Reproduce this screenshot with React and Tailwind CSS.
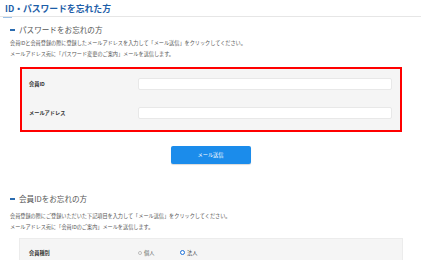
export default function App() {
  const font = { fontFamily: '"Noto Sans CJK JP", "Noto Sans", sans-serif' };
  return (
    <div style={font} className="w-[421px] h-[260px] overflow-hidden bg-white text-[#333]">
      {/* Page title */}
      <div className="pl-[5px] pt-[3px] h-[16px] text-[8.8px] leading-[11px] font-bold text-[#1d5ea8]">
        ID・パスワードを忘れた方
      </div>
      <div className="h-px bg-[#e6e6e6]">
        <div className="ml-[3px] w-[9px] h-px bg-[#9cc0e6] translate-y-[1px]"></div>
      </div>

      {/* Password section */}
      <div className="pl-[10px] pt-[6px]">
        <div className="flex items-center h-[14px]">
          <span className="w-[5px] h-[2px] bg-[#2b6cb0]"></span>
          <span className="ml-[4px] text-[7.6px] text-[#555]">パスワードをお忘れの方</span>
        </div>
        <div className="text-[5.15px] leading-[11px] text-[#555]">
          <p>会員IDと会員登録の際に登録したメールアドレスを入力して「メール送信」をクリックしてください。</p>
          <p>メールアドレス宛に「パスワード変更のご案内」メールを送信します。</p>
        </div>
      </div>

      <div className="mt-[8px] ml-[20px] w-[382px] h-[65px] border-2 border-[#ff0000] bg-[#f5f5f5] px-[7px] pt-[9px]">
        <div className="flex items-center h-[12px]">
          <span className="w-[109px] text-[5.2px] font-bold text-[#333]">会員ID</span>
          <div className="w-[254px] h-[12px] bg-white border border-[#e8e8e8] rounded-[2px]"></div>
        </div>
        <div className="flex items-center h-[12px] mt-[17px]">
          <span className="w-[109px] text-[5.2px] font-bold text-[#333]">メールアドレス</span>
          <div className="w-[254px] h-[12px] bg-white border border-[#e8e8e8] rounded-[2px]"></div>
        </div>
      </div>

      <div className="flex justify-center mt-[14px]">
        <button className="w-[80px] h-[18px] bg-[#1b8ceb] rounded-[2px] text-white text-[5.2px] shadow-[0_1px_1px_rgba(0,0,0,0.15)]">
          メール送信
        </button>
      </div>

      {/* Member ID section */}
      <div className="pl-[10px] pt-[28px]">
        <div className="flex items-center h-[14px]">
          <span className="w-[5px] h-[2px] bg-[#2b6cb0]"></span>
          <span className="ml-[4px] text-[7.6px] text-[#555]">会員IDをお忘れの方</span>
        </div>
        <div className="mt-[3.5px] text-[5.15px] leading-[11px] text-[#555]">
          <p>会員登録の際にご登録いただいた下記項目を入力して「メール送信」をクリックしてください。</p>
          <p>メールアドレス宛に「会員IDのご案内」メールを送信します。</p>
        </div>
      </div>

      <div className="mt-[6.5px] ml-[19px] w-[384px] h-[40px] border border-[#ececec] bg-[#f5f5f5] px-[9px] pt-[8px]">
        <div className="flex items-center h-[12px]">
          <span className="w-[109px] text-[5.2px] font-bold text-[#333]">会員種別</span>
          <div className="flex items-center w-[42px]">
            <span className="w-[4px] h-[4px] rounded-full border border-[#bbb] bg-white"></span>
            <span className="ml-[2px] text-[5.2px] text-[#666]">個人</span>
          </div>
          <div className="flex items-center">
            <span className="w-[5px] h-[5px] rounded-full border-[1.5px] border-[#1a6fd8] bg-white"></span>
            <span className="ml-[2px] text-[5.2px] text-[#444]">法人</span>
          </div>
        </div>
      </div>
    </div>
  );
}
